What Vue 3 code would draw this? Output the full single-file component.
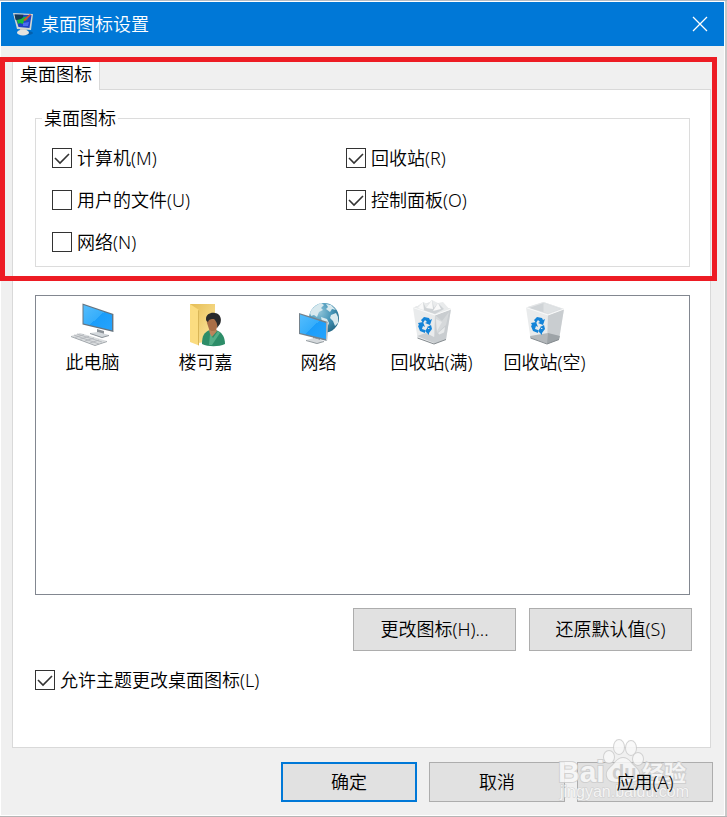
<script setup>
    import { ref } from 'vue'

    const options = ref([
        { id: 'computer', label: '计算机(M)', checked: true },
        { id: 'files', label: '用户的文件(U)', checked: false },
        { id: 'network', label: '网络(N)', checked: false },
        { id: 'recycle', label: '回收站(R)', checked: true },
        { id: 'panel', label: '控制面板(O)', checked: true }
    ])
    const icons = [
        { id: 'pc', name: '此电脑' },
        { id: 'user', name: '楼可嘉' },
        { id: 'net', name: '网络' },
        { id: 'full', name: '回收站(满)' },
        { id: 'empty', name: '回收站(空)' }
    ]
    const allowTheme = ref(true)
</script>

<template>
    <div class="window">
        <header class="title">
            <svg class="logo" viewBox="0 0 22 24">
                <ellipse cx="14" cy="21" rx="7" ry="2" fill="#07508f" opacity=".6" />
                <path d="M8 16l6-1 1 4H8z" fill="#b9bcb8" />
                <ellipse cx="11" cy="20.500" rx="6" ry="3" fill="#e4e3df" />
                <path d="M1 1l20 1-2 16-14-1z" fill="#d5d8d2" />
                <path d="M2.500 2.500l17 .5-2 13-11-1z" fill="#1e43c4" />
                <path d="M2.500 2.500l9 .3-1 4-3 2-4-1z" fill="#153a54" />
                <path d="M5 8l4-1 3-2 5-1-2 4-3 1-1 3-3-1-2 1z" fill="#19bd3a" />
                <path d="M11 8l7-6 1 1-6 6z" fill="#d84a31" />
                <path d="M11 11l6-1-1 4-5 0z" fill="#4a6cf0" />
            </svg>
            <h1>桌面图标设置</h1>
            <button class="close" aria-label="关闭">
                <svg viewBox="0 0 16 16"><path d="M1 1l14 14M15 1L1 15" stroke="#fff" stroke-width="1.3" /></svg>
            </button>
        </header>

        <main class="body">
            <div class="tabs" role="tablist">
                <button class="tab" role="tab" aria-selected="true">桌面图标</button>
            </div>
            <section class="panel">
                <fieldset>
                    <legend>桌面图标</legend>
                    <div class="options">
                        <label v-for="item of options" :key="item.id" class="check">
                            <input type="checkbox" v-model="item.checked">
                            <svg viewBox="0 0 20 20"><path d="M3 10l5 5 9-9" /></svg>
                            <span>{{ item.label }}</span>
                        </label>
                    </div>
                </fieldset>

                <ul class="list">
                    <li v-for="icon of icons" :key="icon.id">
                        <svg v-if="icon.id == 'pc'" viewBox="0 0 48 48">
                            <defs>
                                <linearGradient id="screen" x1="0" y1="0" x2="1" y2="1">
                                    <stop offset="0" stop-color="#55bdfd" />
                                    <stop offset=".5" stop-color="#35adfb" />
                                    <stop offset=".5" stop-color="#1b9dfa" />
                                    <stop offset="1" stop-color="#26a4fd" />
                                </linearGradient>
                            </defs>
                            <path d="M28 30l7 2v5h-7z" fill="#8c9399" />
                            <path d="M21 34l8-1 11 3-7 3z" fill="#d3d8dc" />
                            <path d="M21 34l12 4 7-2v1l-7 2-12-4z" fill="#8b9298" />
                            <path d="M13.500 4.500L44.500 15v18L13.500 25.500z" fill="#667480" />
                            <path d="M14.500 6L43 15.800v15.500L14.500 24.500z" fill="url(#screen)" />
                            <path d="M44 15l1 .5V33l-1-.5z" fill="#bfc5ca" />
                            <path d="M2 37l9-3 27 8-12 4z" fill="#d9dcde" />
                            <path d="M2 37l24 9 12-4v1l-12 4L2 38z" fill="#9da3a8" />
                            <path d="M5 36l25 9M8 35l25 8M6 38.500l9-3M11 40.300l9-3M16 42l9-3M21 44l9-3" fill="none" stroke="#aeb3b7" stroke-width=".8" />
                        </svg>
                        <svg v-else-if="icon.id == 'user'" viewBox="0 0 48 48">
                            <defs>
                                <linearGradient id="folder" x1="0" y1="0" x2="1" y2="1">
                                    <stop offset="0" stop-color="#e5bd55" />
                                    <stop offset="1" stop-color="#ffe9a1" />
                                </linearGradient>
                            </defs>
                            <path d="M8 5h25v37l-17 2-8-2z" fill="url(#folder)" />
                            <path d="M8 5l9 6v35.500L8 43z" fill="#fbdc80" />
                            <path d="M16 11l1 .5v35l-1-.5z" fill="#d9b657" />
                            <path d="M20 45c0-8 2-12 8-14h6c6 2 9 7 9 14-6 3-17 3-23 0z" fill="#2d8d68" />
                            <path d="M27 31l2 8 6-7-2-4h-5z" fill="#bc845b" />
                            <path d="M28 35l3 4 5-7 2 2-8 12h-3z" fill="#55ae87" />
                            <path d="M25 24c-1-6 2-9 6-9s7 3 6 8l-3 8c-3 2-6 1-7-1z" fill="#a96e47" />
                            <path d="M24 20c0-5 5-7 9-6 6 1 7 7 5 11l-3 4c1-4-1-7-3-9-3 0-5 0-6 3-2-1-2-2-2-3z" fill="#292a2c" />
                        </svg>
                        <svg v-else-if="icon.id == 'net'" viewBox="0 0 48 48">
                            <defs>
                                <radialGradient id="globe" cx=".35" cy=".3" r=".75">
                                    <stop offset="0" stop-color="#8fc4d8" />
                                    <stop offset=".55" stop-color="#4595b8" />
                                    <stop offset="1" stop-color="#246987" />
                                </radialGradient>
                            </defs>
                            <circle cx="29" cy="19" r="15" fill="url(#globe)" />
                            <path d="M15 14c2-5 6-8 11-10l3 2-3 3 2 2-4 2-2 5-3-2-3 1zM31 5l5 1 5 5-4-1-2 3-4-3 2-2zM36 16l5-2 2 4v6l-3 3-2-5-3-3zM26 18l6 2 2 4-2 5-5-6z" fill="#d8e9ee" />
                            <path d="M18 38l7 2v4h-7z" fill="#858e95" />
                            <path d="M11 41l8-2 10 3-7 3z" fill="#d5d9dc" />
                            <path d="M11 41l11 3 7-2v1l-7 2-11-3z" fill="#929a9f" />
                            <path d="M4 14l29 9-1 19L4 35z" fill="#75828c" />
                            <path d="M5 15.500L31 24v16L5 34z" fill="url(#screen)" />
                            <path d="M31.500 23l1.500.5L32 42l-1-.5z" fill="#c4cbd0" />
                        </svg>
                        <svg v-else viewBox="0 0 48 48">
                            <path d="M5 8.500L22.500 3 43 10l-5 30.500-12 4.500-16.500-6z" fill="#e9ebec" />
                            <path d="M27 16l16-6-5 30.500L26 45z" fill="#c9cdd0" />
                            <path d="M5 8.500L22.500 3 43 10l-16 6z" fill="#e3e5e7" />
                            <path d="M8 9l14.500-5L40 10l-13 4.500z" fill="#d0d4d7" />
                            <path d="M22.500 4v9L27 14.500 40 10z" fill="#dfe2e4" />
                            <path v-if="icon.id == 'empty'" d="M9 37l18-3v11L9.500 39z" fill="#b4b8bb" />
                            <path v-if="icon.id == 'empty'" d="M27 34l12 3-1 3.500L26 45z" fill="#9da3a7" />
                            <g v-if="icon.id == 'full'">
                                <path d="M7 9l8-6 5 2 4-4 6 3 5-1 7 8-15 5z" fill="#e9ebec" />
                                <path d="M15 3l3 6 6-8 2 8 4-5 6 6-9 5-12-4z" fill="#cfd3d6" />
                                <path d="M18 9l6-8 1 9zM30 4l3 6-8 2zM10 9l5-6 1 8z" fill="#f9f9f9" />
                                <path d="M27 16l7 6 7-9-3 13-9 8z" fill="#d6d9db" />
                                <path d="M28 20l6 3-5 9zM30 34l7-6-2 12z" fill="#e7e9ea" />
                                <path d="M9 37l9-3 8 4 11-5-1 7-10 4z" fill="#c9cdd0" />
                            </g>
                            <path d="M5 8.500l22 7.500 16-6" fill="none" stroke="#f9fafa" />
                            <path d="M9.500 39L26 45l12-4.500" fill="none" stroke="#858b8f" />
                            <g fill="#1484d8">
                                <path d="M13 21l3-3 5 1 1 2 2-1-2 6-5-2 2-1-2-2-2 3z" />
                                <path d="M10 24l5-1 2 5-2-1-1 3 3 1v3l-5-2-2-5 1-1z" />
                                <path d="M19 28l4-2 1 4-3 4v2l-4-4 3-4v2h2z" />
                            </g>
                        </svg>
                        <span>{{ icon.name }}</span>
                    </li>
                </ul>

                <div class="actions">
                    <button>更改图标(H)...</button>
                    <button>还原默认值(S)</button>
                </div>
                <label class="check theme">
                    <input type="checkbox" v-model="allowTheme">
                    <svg viewBox="0 0 20 20"><path d="M3 10l5 5 9-9" /></svg>
                    <span>允许主题更改桌面图标(L)</span>
                </label>
            </section>
        </main>

        <footer class="footer">
            <button class="default">确定</button>
            <button>取消</button>
            <button><span class="front">应用(A)</span></button>
        </footer>

        <div class="highlight"></div>
        <svg class="watermark" viewBox="0 0 136 66">
            <g class="paw">
                <ellipse cx="51" cy="25" rx="5" ry="6" />
                <ellipse cx="61" cy="15" rx="5" ry="7" />
                <ellipse cx="73" cy="16" rx="5" ry="7" />
                <ellipse cx="80" cy="27" rx="5" ry="6" />
                <path d="M65 26c5 0 7 4 10 7 4 4 7 6 6 11-1 6-7 6-16 6s-15 0-16-6c-1-5 2-7 6-11 3-3 5-7 10-7z" />
            </g>
            <text class="brand" x="0" y="50">Bai</text>
            <text class="du" x="54" y="47">du</text>
            <text class="cn" x="84" y="49">经验</text>
            <text class="url" x="2" y="65">jingyan.baidu.com</text>
        </svg>
    </div>
</template>

<style>
body {
    background: #c8c8c8;
}
</style>

<style scoped>
.window {
    position: relative;
    box-sizing: border-box;
    min-height: 100vh;
    padding: 1px 3px 1px 1px;
    display: flex;
    flex-direction: column;
    font: 350 18px/24px "Noto Sans", "Noto Sans CJK SC", sans-serif;
    color: #000;
    background: linear-gradient(#f0f0f0, #f0f0f0) content-box, linear-gradient(to right, #fff calc(100% - 2px), #c8c8c8 0);
    border-top: 1px solid #b5bcc4;
    border-bottom: 1px solid #b5b5b5;
}

button {
    box-sizing: border-box;
    font: inherit;
    color: inherit;
    padding: 0 0 1px;
    border: 1px solid #adadad;
    background: #e1e1e1;
}

.title {
    height: 44px;
    padding: 0 16px 0 11px;
    display: flex;
    align-items: center;
    gap: 7px;
    color: #fff;
    background: #0078d7;

    h1 {
        flex: 1;
        margin: 0;
        font: inherit;
    }
    .logo {
        width: 22px;
        height: 24px;
    }
    .close {
        width: 16px;
        height: 16px;
        padding: 0;
        border: 0;
        background: none;
    }
    .close svg {
        display: block;
    }
}

.body {
    flex: 1;
    display: flex;
    flex-direction: column;
    padding: 14px 13px 0 11px;
}

.tabs {
    display: flex;

    .tab {
        position: relative;
        width: 88px;
        height: 30px;
        padding-bottom: 4px;
        border: 1px solid #d9d9d9;
        border-bottom: 0;
        background: #fff;
    }
}

.panel {
    flex: 1;
    display: flex;
    flex-direction: column;
    margin-top: -1px;
    padding: 16px 20px 55px 22px;
    border: 1px solid #d9d9d9;
    background: #fff;
}

fieldset {
    min-width: 0;
    margin: 0;
    padding: 0 6px;
    border: 1px solid #dcdcdc;
}

legend {
    padding: 0 2px;
}

.options {
    display: grid;
    grid-template: repeat(3, 24px) / 294px 1fr;
    grid-auto-flow: column;
    row-gap: 18px;
    padding: 16px 0 12px 10px;
}

.check {
    position: relative;
    display: flex;
    align-items: center;
    gap: 5px;

    input {
        appearance: none;
        box-sizing: border-box;
        width: 20px;
        height: 20px;
        margin: 0;
        border: 1px solid #333;
        background: #fff;
    }
    /* tick lies over the box */
    svg {
        position: absolute;
        left: 0;
        width: 20px;
        height: 20px;
        fill: none;
        stroke: #333;
        stroke-width: 1.6;
        visibility: hidden;
        pointer-events: none;
    }
    input:checked + svg {
        visibility: visible;
    }
}

.list {
    flex: 1;
    box-sizing: border-box;
    min-height: 300px;
    margin: 28px 0 0;
    padding: 3px 0;
    display: flex;
    flex-wrap: wrap;
    align-content: flex-start;
    list-style: none;
    border: 1px solid #828790;

    li {
        width: 113px;
        display: flex;
        flex-direction: column;
        align-items: center;
        gap: 3px;
    }
    svg {
        width: 48px;
        height: 48px;
    }
}

.actions {
    display: flex;
    justify-content: flex-end;
    gap: 13px;
    margin: 13px -2px 0 0;

    button {
        width: 163px;
        height: 43px;
    }
}

.theme {
    align-self: flex-start;
    margin-top: 17px;
}

.footer {
    display: flex;
    justify-content: flex-end;
    gap: 12px;
    padding: 14px 11px 13px;

    button {
        width: 136px;
        height: 40px;
    }
    .default {
        border: 2px solid #0078d7;
    }
    /* keeps the caption above the watermark */
    .front {
        position: relative;
        z-index: 2;
    }
}

.highlight {
    position: absolute;
    top: 56px;
    left: 0;
    right: 10px;
    height: 214px;
    border: 5px solid #ed1c24;
    pointer-events: none;
}

.watermark {
    position: absolute;
    z-index: 1;
    right: 33px;
    bottom: 18px;
    width: 136px;
    height: 66px;
    overflow: visible;
    pointer-events: none;
    fill: #f8f8f8;
    stroke: #ccc;
    stroke-width: 2;
    paint-order: stroke;
    opacity: .85;
    font-family: "Liberation Sans", "Noto Sans CJK SC", sans-serif;

    .brand {
        font-size: 30px;
        font-weight: bold;
    }
    .du {
        font-size: 20px;
        font-weight: bold;
        fill: #ccc;
        stroke: none;
    }
    .cn {
        font-size: 22px;
        font-weight: bold;
    }
    .url {
        font-size: 16px;
        stroke-width: 1;
    }
}
</style>
